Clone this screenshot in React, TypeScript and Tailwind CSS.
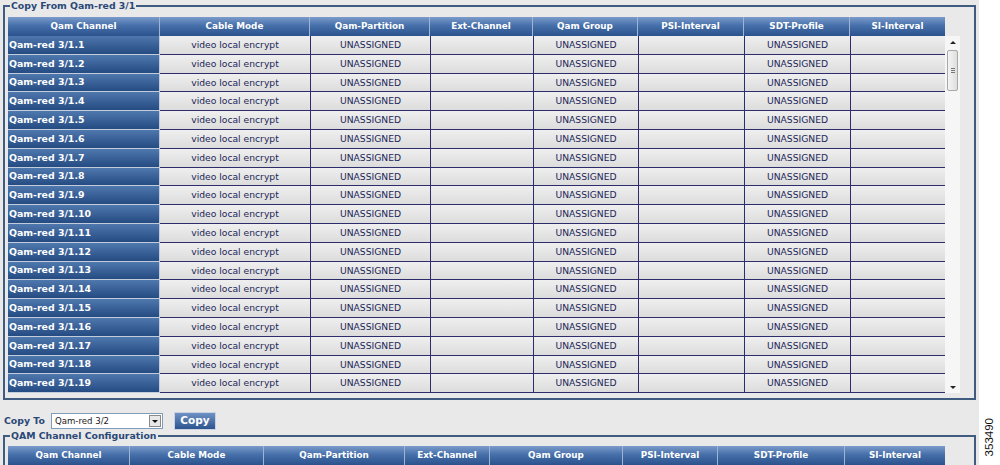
import React from "react";

const topCols = [
  { name: "Qam Channel", w: 152 },
  { name: "Cable Mode", w: 150 },
  { name: "Qam-Partition", w: 120 },
  { name: "Ext-Channel", w: 103 },
  { name: "Qam Group", w: 105 },
  { name: "PSI-Interval", w: 106 },
  { name: "SDT-Profile", w: 106 },
  { name: "SI-Interval", w: 95 },
];

const bottomCols = [
  { name: "Qam Channel", w: 122 },
  { name: "Cable Mode", w: 134 },
  { name: "Qam-Partition", w: 141 },
  { name: "Ext-Channel", w: 85 },
  { name: "Qam Group", w: 133 },
  { name: "PSI-Interval", w: 95 },
  { name: "SDT-Profile", w: 127 },
  { name: "SI-Interval", w: 100 },
];

const font = { fontFamily: '"DejaVu Sans", Verdana, sans-serif' };

function HeaderRow({ cols }: { cols: { name: string; w: number }[] }) {
  return (
    <div className="flex h-[19px]">
      {cols.map((c, i) => (
        <div
          key={c.name}
          style={{ width: c.w }}
          className={
            "flex items-center justify-center bg-[linear-gradient(to_bottom,#7b9bcb_0%,#4670aa_45%,#2b528d_100%)] text-white font-bold text-[8.8px] " +
            (i < cols.length - 1 ? "border-r border-[#9fb4d3]" : "")
          }
        >
          {c.name}
        </div>
      ))}
    </div>
  );
}

function BodyRow({ n }: { n: number }) {
  const vals = ["video local encrypt", "UNASSIGNED", "", "UNASSIGNED", "", "UNASSIGNED", ""];
  return (
    <div className="flex h-[18.8px]">
      <div
        style={{ width: topCols[0].w }}
        className="flex items-center pl-[1px] bg-[linear-gradient(to_bottom,#4f78ae,#244b82)] text-white font-bold text-[9.4px] border-b border-r border-[#c3ccda]"
      >
        Qam-red 3/1.{n}
      </div>
      {vals.map((v, i) => (
        <div
          key={i}
          style={{ width: topCols[i + 1].w }}
          className={
            "flex items-center justify-center bg-[linear-gradient(to_bottom,#efefef,#dcdcdc)] text-[#1c2658] text-[9.2px] border-b border-[#2d2d6e] " +
            (i > 0 ? "border-l" : "")
          }
        >
          {v}
        </div>
      ))}
    </div>
  );
}

function Scrollbar() {
  return (
    <div className="w-[15px] h-full bg-[#f6f6f6] flex flex-col items-center">
      <div className="h-[12px] flex items-center justify-center">
        <div className="w-0 h-0 border-l-[3px] border-r-[3px] border-b-[3px] border-l-transparent border-r-transparent border-b-[#222]" />
      </div>
      <div className="mt-[2px] w-[11px] h-[41px] rounded-[2px] border border-[#a8a8a8] bg-[linear-gradient(to_right,#f4f4f4,#dedede)] flex flex-col items-center justify-center gap-[1px]">
        <div className="w-[4px] h-px bg-[#777]" />
        <div className="w-[4px] h-px bg-[#777]" />
        <div className="w-[4px] h-px bg-[#777]" />
      </div>
      <div className="flex-1" />
      <div className="h-[12px] flex items-center justify-center">
        <div className="w-0 h-0 border-l-[3px] border-r-[3px] border-t-[3px] border-l-transparent border-r-transparent border-t-[#222]" />
      </div>
    </div>
  );
}

export default function App() {
  const rows = Array.from({ length: 19 }, (_, i) => i + 1);
  return (
    <div className="w-[1000px] h-[465px] overflow-hidden flex bg-white" style={font}>
      <div className="w-[979px] h-full bg-[#e9e9e9] flex flex-col">
        <fieldset className="ml-[3px] w-[973px] border-2 border-[#3f5b80] pl-[3px] pt-[6px] pb-[5px]">
          <legend className="ml-[2px] px-[1px] text-[9.35px] leading-[11px] font-bold text-[#2a4877]">
            Copy From Qam-red 3/1
          </legend>
          <div className="flex flex-col">
            <HeaderRow cols={topCols} />
            <div className="flex h-[357.2px] overflow-hidden">
              <div className="flex flex-col w-[937px]">
                {rows.map((n) => (
                  <BodyRow key={n} n={n} />
                ))}
              </div>
              <Scrollbar />
            </div>
          </div>
        </fieldset>

        <div className="mt-[12px] flex items-center h-[18px] pl-[4px]">
          <span className="text-[9.35px] font-bold text-[#2a4877]">Copy To</span>
          <div className="ml-[6px] w-[112px] h-[16px] bg-white border border-[#7f9db9] flex items-center">
            <span className="flex-1 pl-[3px] text-[8.6px] text-[#1a1a1a]">Qam-red 3/2</span>
            <div className="w-[12px] h-[12px] mr-[1px] border border-[#8a8a8a] bg-[#e8e8e8] flex items-center justify-center">
              <div className="w-0 h-0 border-l-[3px] border-r-[3px] border-t-[3px] border-l-transparent border-r-transparent border-t-[#111]" />
            </div>
          </div>
          <button className="ml-[11px] w-[42px] h-[18px] bg-[linear-gradient(to_bottom,#6f92c4,#2d548f)] border border-[#c8d2e2] text-white font-bold text-[10.5px] flex items-center justify-center">
            Copy
          </button>
        </div>

        <fieldset className="ml-[3px] w-[973px] border-2 border-[#3f5b80] pl-[3px] pt-[5px] pb-[6px]">
          <legend className="ml-[2px] px-[1px] text-[9.35px] leading-[11px] font-bold text-[#2a4877]">
            QAM Channel Configuration
          </legend>
          <HeaderRow cols={bottomCols} />
        </fieldset>
      </div>
      <div className="flex-1 flex flex-col justify-end items-center pb-[9px]">
        <span
          className="text-[11.5px] text-[#111] rotate-180"
          style={{ writingMode: "vertical-rl", fontFamily: '"Liberation Sans", Arial, sans-serif' }}
        >
          353490
        </span>
      </div>
    </div>
  );
}
